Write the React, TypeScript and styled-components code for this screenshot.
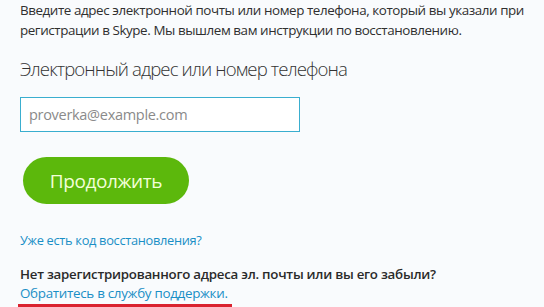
import styled, { createGlobalStyle } from "styled-components";

const GlobalStyle = createGlobalStyle`
  html, body {
    margin: 0;
    padding: 0;
    background: #f9fbfd;
    overflow: hidden;
  }
  body {
    font-family: "Open Sans", "Noto Sans", sans-serif;
    color: #2f2f2f;
  }
`;

export default function App() {
  return (
    <>
      <GlobalStyle />
      <Page>
        <Intro>
          Введите адрес электронной почты или номер телефона, который вы указали при
          регистрации в Skype. Мы вышлем вам инструкции по восстановлению.
        </Intro>
        <Heading>Электронный адрес или номер телефона</Heading>
        <Field placeholder="proverka@example.com" />
        <SubmitButton>Продолжить</SubmitButton>
        <Link href="#">Уже есть код восстановления?</Link>
        <Footer>
          <Question>Нет зарегистрированного адреса эл. почты или вы его забыли?</Question>
          <SupportLink href="#">Обратитесь в службу поддержки.</SupportLink>
        </Footer>
      </Page>
    </>
  );
}

const Page = styled.div`
  display: flex;
  flex-direction: column;
  align-items: flex-start;
  padding: 0 0 0 20px;
  width: 544px;
  box-sizing: border-box;
  & > * {
    flex-shrink: 0;
  }
`;

const Intro = styled.p`
  margin: 0;
  font-size: 13.4px;
  line-height: 20px;
  letter-spacing: -0.42px;
  color: #2f2f2f;
`;

const Heading = styled.h2`
  margin: 16px 0 0;
  font-size: 18.6px;
  font-weight: 300;
  line-height: 26px;
  letter-spacing: -0.9px;
  color: #333;
`;

const Field = styled.input`
  margin-top: 15px;
  width: 280px;
  height: 35px;
  box-sizing: border-box;
  border: 1px solid #3aaecf;
  background: #fff;
  padding: 0 8px;
  font-family: inherit;
  font-size: 14.5px;
  letter-spacing: -0.3px;
  outline: none;
  &::placeholder {
    color: #8a8a8a;
  }
`;

const SubmitButton = styled.button`
  margin: 25px 0 0 3px;
  width: 166px;
  height: 47px;
  border: none;
  border-radius: 24px;
  background: #5cb80c;
  color: #f2ffd8;
  font-family: inherit;
  font-size: 19px;
  letter-spacing: -0.4px;
  cursor: pointer;
`;

const Link = styled.a`
  margin-top: 26px;
  font-size: 12.8px;
  line-height: 20px;
  letter-spacing: -0.3px;
  color: #1a8fc6;
  text-decoration: none;
`;

const Footer = styled.div`
  display: flex;
  flex-direction: column;
  align-items: flex-start;
  margin-top: 14px;
`;

const Question = styled.span`
  font-size: 13.3px;
  font-weight: 600;
  line-height: 20px;
  letter-spacing: -0.25px;
  color: #2a2a2a;
`;

const SupportLink = styled.a`
  font-size: 13.4px;
  line-height: 19px;
  letter-spacing: -0.3px;
  color: #1a8fc6;
  text-decoration: none;
  margin-left: -2px;
  padding: 0 4px 1px 2px;
  border-bottom: 3px solid #d9232f;
`;
